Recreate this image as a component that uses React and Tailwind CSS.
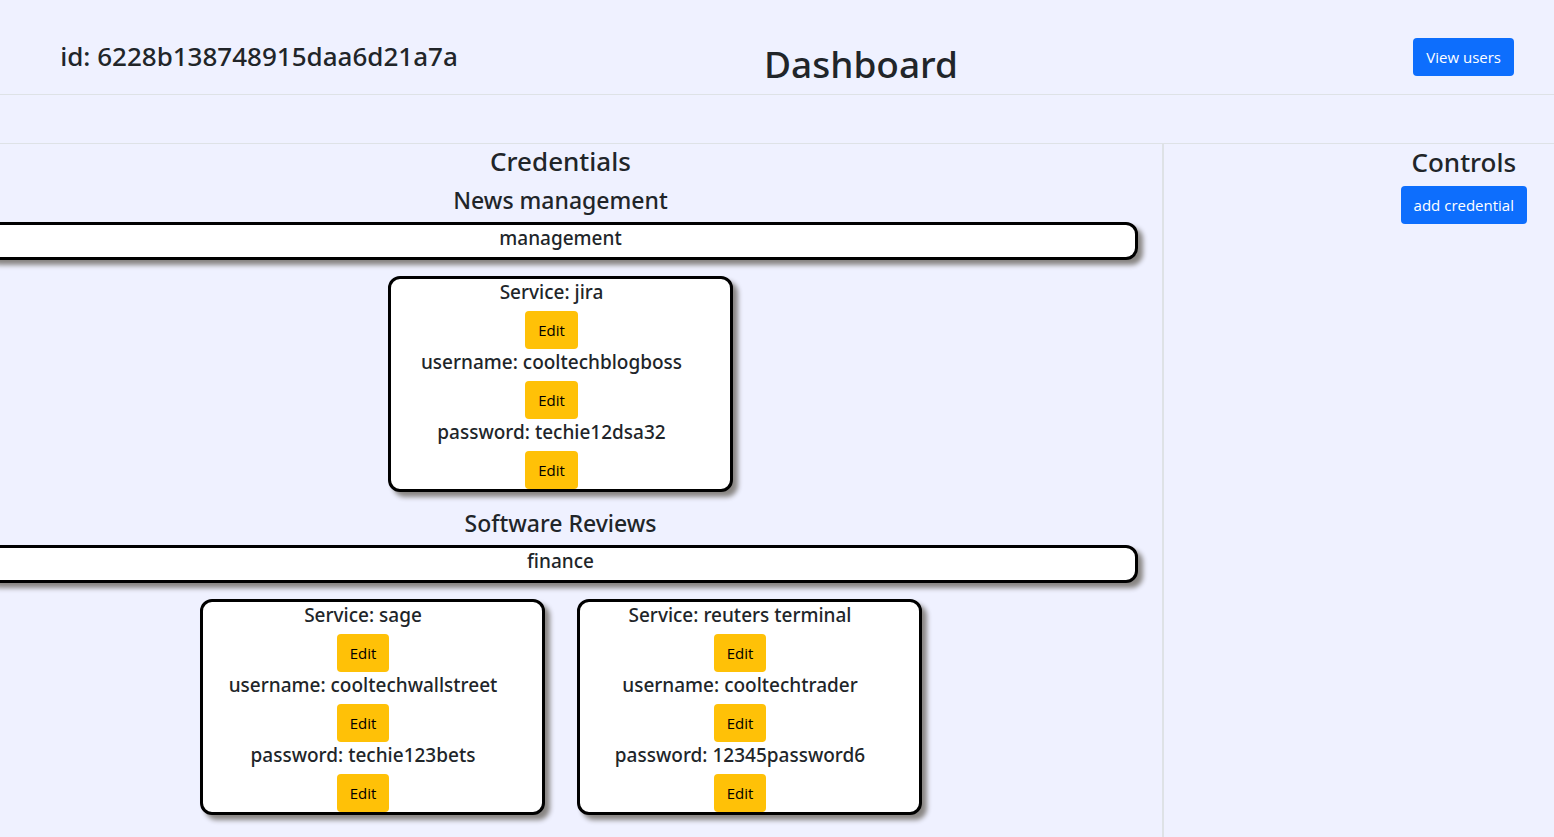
const groups = [
  {
    unit: 'News management',
    division: 'management',
    credentials: [{ service: 'jira', username: 'cooltechblogboss', password: 'techie12dsa32' }],
  },
  {
    unit: 'Software Reviews',
    division: 'finance',
    credentials: [
      { service: 'sage', username: 'cooltechwallstreet', password: 'techie123bets' },
      { service: 'reuters terminal', username: 'cooltechtrader', password: '12345password6' },
    ],
  },
];

const box = 'rounded-xl border-3 border-black bg-white shadow-[5px_5px_5px_#888583]';

function PrimaryButton({ children }) {
  return (
    <button type="button" className="h-[38px] rounded bg-[#0d6efd] px-[13px] font-['Open_Sans',sans-serif] text-[15px] leading-6 whitespace-nowrap text-white">
      {children}
    </button>
  );
}

function Field({ label, value }) {
  return (
    <div className="flex flex-col items-center">
      <h5 className="mb-1.5 text-[19px] leading-[26px] font-medium whitespace-nowrap">
        {label}: {value}
      </h5>
      <button type="button" aria-label={`Edit ${label}`} className="h-[38px] rounded bg-[#ffc107] px-[13px] font-['Open_Sans',sans-serif] text-[15px] leading-6 text-black">
        Edit
      </button>
    </div>
  );
}

function CredentialCard({ credential }) {
  return (
    <article className={`w-[345px] pr-[18px] ${box}`}>
      <Field label="Service" value={credential.service} />
      <Field label="username" value={credential.username} />
      <Field label="password" value={credential.password} />
    </article>
  );
}

export default function App() {
  return (
    <div className="flex min-h-screen flex-col overflow-x-hidden bg-[#eff1ff] font-['Noto_Sans',sans-serif] text-[#212529]">
      <header className="grid grid-cols-[518fr_686fr_350fr] items-start border-b border-[#dee2e6] pt-[38px] pb-[6px]">
        <h3 className="text-center text-[26px] leading-9 font-medium">id: 6228b138748915daa6d21a7a</h3>
        <h1 className="pt-[2px] text-center text-[37px] leading-12 font-medium">Dashboard</h1>
        <div className="flex justify-end pr-10">
          <PrimaryButton>View users</PrimaryButton>
        </div>
      </header>
      <div className="h-[49px] border-b border-[#dee2e6]" />
      <div className="grid flex-1 grid-cols-[1164fr_390fr]">
        <main className="border-r-2 border-[#dee2e6] pr-6 pb-4">
          <div className="-ml-[17px] text-center">
            <h3 className="mb-1.5 text-[26px] leading-[35px] font-medium">Credentials</h3>
            {groups.map((group) => (
              <section key={group.unit} className="mb-4">
                <h4 className="mb-1.5 text-[23px] leading-[31px] font-medium">{group.unit}</h4>
                <div className={`mb-4 pb-1.5 ${box}`}>
                  <h5 className="text-[19px] leading-[26px] font-medium">{group.division}</h5>
                </div>
                <div className="flex flex-wrap justify-center gap-8">
                  {group.credentials.map((credential) => (
                    <CredentialCard key={credential.service} credential={credential} />
                  ))}
                </div>
              </section>
            ))}
          </div>
        </main>
        <aside className="flex flex-col items-end pr-[27px]">
          <div className="flex flex-col items-center">
            <h3 className="mb-1.5 text-[26px] leading-9 font-medium">Controls</h3>
            <PrimaryButton>add credential</PrimaryButton>
          </div>
        </aside>
      </div>
    </div>
  );
}
